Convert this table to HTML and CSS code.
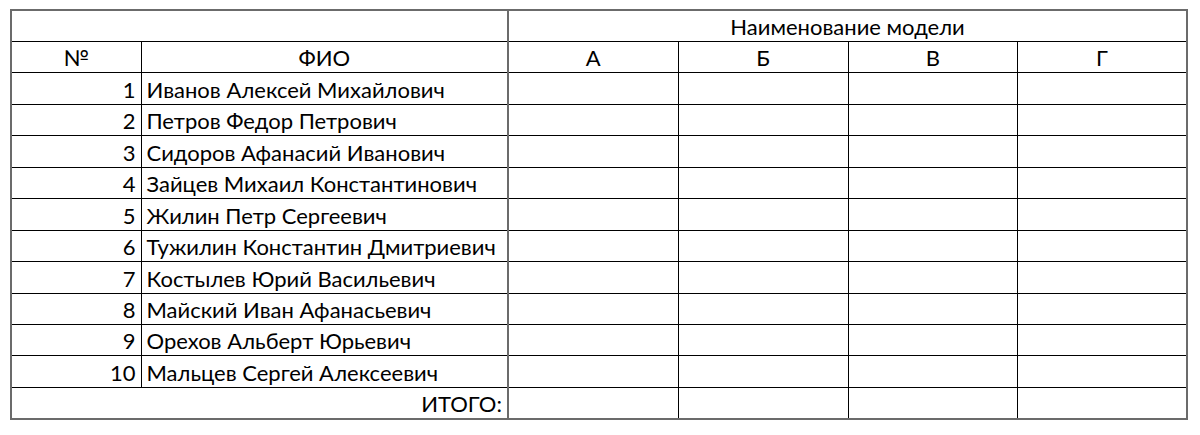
FILE: index.html
```html
<!DOCTYPE html>
<html lang="ru">
<head>
<meta charset="utf-8">
<title>Таблица</title>
<link rel="stylesheet" href="styles.css">
</head>
<body>
<table class="sheet">
  <colgroup>
    <col class="c-num">
    <col class="c-name">
    <col class="c-m">
    <col class="c-m">
    <col class="c-m2">
    <col class="c-m2">
  </colgroup>
  <tr>
    <td class="split" colspan="2"></td>
    <td class="center" colspan="4">Наименование модели</td>
  </tr>
  <tr>
    <td class="center">№</td>
    <td class="center split">ФИО</td>
    <td class="center">А</td>
    <td class="center">Б</td>
    <td class="center">В</td>
    <td class="center">Г</td>
  </tr>
  <tr><td class="num">1</td><td class="split">Иванов Алексей Михайлович</td><td></td><td></td><td></td><td></td></tr>
  <tr><td class="num">2</td><td class="split">Петров Федор Петрович</td><td></td><td></td><td></td><td></td></tr>
  <tr><td class="num">3</td><td class="split">Сидоров Афанасий Иванович</td><td></td><td></td><td></td><td></td></tr>
  <tr><td class="num">4</td><td class="split">Зайцев Михаил Константинович</td><td></td><td></td><td></td><td></td></tr>
  <tr><td class="num">5</td><td class="split">Жилин Петр Сергеевич</td><td></td><td></td><td></td><td></td></tr>
  <tr><td class="num">6</td><td class="split">Тужилин Константин Дмитриевич</td><td></td><td></td><td></td><td></td></tr>
  <tr><td class="num">7</td><td class="split">Костылев Юрий Васильевич</td><td></td><td></td><td></td><td></td></tr>
  <tr><td class="num">8</td><td class="split">Майский Иван Афанасьевич</td><td></td><td></td><td></td><td></td></tr>
  <tr><td class="num">9</td><td class="split">Орехов Альберт Юрьевич</td><td></td><td></td><td></td><td></td></tr>
  <tr><td class="num">10</td><td class="split">Мальцев Сергей Алексеевич</td><td></td><td></td><td></td><td></td></tr>
  <tr>
    <td class="num split" colspan="2">ИТОГО:</td>
    <td></td><td></td><td></td><td></td>
  </tr>
</table>
</body>
</html>
```
FILE: styles.css
```css
html, body {
  margin: 0;
  padding: 0;
  background: #fff;
}
body {
  padding: 9px 0 0 10px;
  font-family: Lato, "Liberation Sans", sans-serif;
  font-size: 22px;
  color: #000;
}
.sheet {
  border-collapse: collapse;
  table-layout: fixed;
  width: 1178px;
  border: 2px solid #6b6b6b;
}
.c-num { width: 130px; }
.c-name { width: 367px; }
.c-m { width: 170px; }
.c-m2 { width: 169.5px; }
.sheet tr {
  height: 31.46px;
}
.sheet td {
  border: 1px solid #000;
  padding: 0 5px 2px 5px;
  vertical-align: bottom;
  line-height: 24px;
  white-space: nowrap;
  overflow: hidden;
}
.sheet td.split {
  border-right: 2px solid #6b6b6b;
}
.center { text-align: center; }
.num { text-align: right; }
```
